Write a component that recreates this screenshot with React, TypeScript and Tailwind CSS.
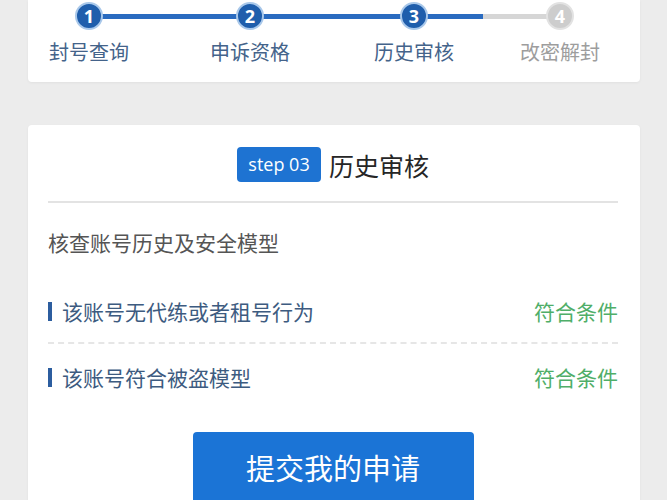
import React from "react";

const cjk = { fontFamily: '"Noto Sans CJK SC", "Noto Sans", sans-serif' };

function Circle({ n, active }: { n: number; active: boolean }) {
  return active ? (
    <div className="relative z-10 flex h-[28px] w-[28px] items-center justify-center rounded-full border-[2px] border-[#a9c8ea] bg-[#1f5eac] text-[18px] font-bold leading-none text-white [font-family:'Open_Sans',sans-serif]">
      {n}
    </div>
  ) : (
    <div className="relative z-10 flex h-[28px] w-[28px] items-center justify-center rounded-full border-[2px] border-[#e2e2e2] bg-[#cdcdcd] text-[18px] font-bold leading-none text-white [font-family:'Open_Sans',sans-serif]">
      {n}
    </div>
  );
}

function Step({ n, label, active, className }: { n: number; label: string; active: boolean; className: string }) {
  return (
    <div className={"flex w-[100px] flex-col items-center " + className}>
      <Circle n={n} active={active} />
      <div
        className={"mt-[8px] text-[20px] leading-[28px] " + (active ? "text-[#44638a]" : "text-[#9d9d9d]")}
        style={cjk}
      >
        {label}
      </div>
    </div>
  );
}

function Row({ text, last }: { text: string; last?: boolean }) {
  return (
    <div
      className={
        "flex items-center justify-between " +
        (last ? "h-[66px]" : "h-[64px] border-b-[2px] border-dashed border-[#e6e6e6]")
      }
    >
      <div className="flex items-center">
        <div className="h-[19px] w-[4px] bg-[#2c5d9f]" />
        <div className="ml-[10px] text-[21px] leading-[28px] text-[#3d5b80]" style={cjk}>
          {text}
        </div>
      </div>
      <div className="text-[21px] leading-[28px] text-[#4fae68]" style={cjk}>
        符合条件
      </div>
    </div>
  );
}

export default function App() {
  return (
    <div className="h-[500px] w-[667px] overflow-hidden bg-[#ececec]">
      {/* progress card */}
      <div className="mx-[28px] h-[82px] w-[612px] rounded-b-[4px] bg-white pt-[2px] shadow-[0_1px_3px_rgba(0,0,0,0.05)]">
        <div className="relative flex pl-[11px]">
          <div className="absolute left-[61px] top-[12px] h-[5px] w-[394px] bg-[#2a6bc0]" />
          <div className="absolute left-[455px] top-[12px] h-[5px] w-[80px] bg-[#d6d6d6]" />
          <Step n={1} label="封号查询" active className="" />
          <Step n={2} label="申诉资格" active className="ml-[61px]" />
          <Step n={3} label="历史审核" active className="ml-[64px]" />
          <Step n={4} label="改密解封" active={false} className="ml-[46px]" />
        </div>
      </div>

      {/* main card */}
      <div className="mx-[28px] mt-[43px] h-[420px] w-[612px] rounded-[4px] bg-white pl-[20px] pr-[22px] pt-[22px] shadow-[0_1px_3px_rgba(0,0,0,0.05)]">
        <div className="flex items-center justify-center gap-[8px]">
          <div className="flex h-[35px] w-[84px] items-center justify-center rounded-[4px] bg-[#1e73d2] text-[18px] text-white [font-family:'Open_Sans',sans-serif]">
            step 03
          </div>
          <div className="text-[25px] leading-[34px] text-[#262626]" style={cjk}>
            历史审核
          </div>
        </div>
        <div className="mt-[19px] h-[2px] bg-[#e3e3e3]" />
        <div className="mt-[25px] text-[21px] leading-[28px] text-[#555555]" style={cjk}>
          核查账号历史及安全模型
        </div>
        <div className="mt-[24px]">
          <Row text="该账号无代练或者租号行为" />
          <Row text="该账号符合被盗模型" last />
        </div>
        <div className="mx-auto mt-[22px] flex h-[76px] w-[281px] items-center justify-center rounded-[4px] bg-[#1b74d6] pb-[4px] text-[29px] text-white" style={cjk}>
          提交我的申请
        </div>
      </div>
    </div>
  );
}
